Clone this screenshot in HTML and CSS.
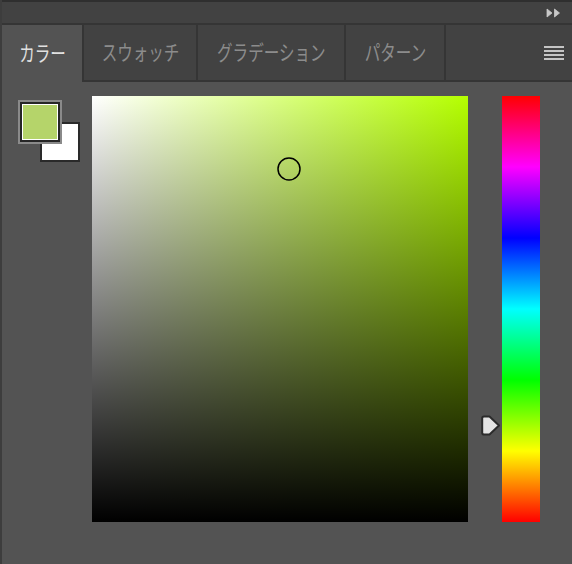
FILE: index.html
```html
<!DOCTYPE html>
<html lang="ja">
<head>
<meta charset="utf-8">
<title>カラー</title>
<link rel="stylesheet" href="styles.css">
</head>
<body>
<div class="panel">
  <div class="topbar">
    <svg class="collapse" width="15" height="10" viewBox="0 0 15 10">
      <path d="M1 1 L6 5 L1 9 Z M8.5 1 L13.5 5 L8.5 9 Z" fill="#c8c8c8" stroke="#c8c8c8" stroke-width="0.8" stroke-linejoin="round"/>
    </svg>
  </div>
  <div class="tabs">
    <div class="tab active w1"><span class="label">カラー</span></div>
    <div class="tab w2"><span class="label">スウォッチ</span></div>
    <div class="tab w3"><span class="label">グラデーション</span></div>
    <div class="tab w4"><span class="label">パターン</span></div>
    <div class="tab filler">
      <div class="menu"><i></i><i></i><i></i><i></i></div>
    </div>
  </div>
  <div class="content">
    <div class="swatches">
      <div class="bg-swatch"></div>
      <div class="fg-swatch"></div>
    </div>
    <div class="field">
      <svg class="picker" width="26" height="26" viewBox="0 0 26 26">
        <circle cx="13" cy="13" r="11" fill="none" stroke="#000" stroke-width="1.5"/>
      </svg>
    </div>
    <div class="hue-wrap">
      <div class="hue"></div>
      <svg class="hue-marker" width="20" height="21" viewBox="0 0 20 21">
        <path d="M3 1.5 L8.5 1.5 L18 10.5 L8.5 19.5 L3 19.5 Q1.2 19.5 1.2 17.7 L1.2 3.3 Q1.2 1.5 3 1.5 Z" fill="#e4e4e4" stroke="#2b2b2b" stroke-width="2" stroke-linejoin="round"/>
      </svg>
    </div>
  </div>
</div>
</body>
</html>
```

FILE: styles.css
```css
* { box-sizing: border-box; }
html, body {
  margin: 0;
  padding: 0;
  background: #535353;
  width: 572px;
  height: 564px;
  overflow: hidden;
  font-family: "Noto Sans CJK JP", "Noto Sans", sans-serif;
}
.panel {
  height: 564px;
  border-left: 2px solid #3d3d3d;
}
.topbar {
  height: 25px;
  background: #424242;
  border-top: 2px solid #2f2f2f;
  border-bottom: 2px solid #353535;
  display: flex;
  justify-content: flex-end;
  align-items: center;
  padding-right: 11px;
}
.collapse { display: block; margin-top: 1px; }
.tabs {
  display: flex;
  height: 57px;
}
.tab {
  background: #424242;
  border-left: 2px solid #353535;
  border-bottom: 2px solid #353535;
  display: flex;
  align-items: center;
  justify-content: center;
  color: #8c8c8c;
  font-size: 21px;
  line-height: 1;
}
.tab.active {
  background: #535353;
  border: none;
  color: #e0e0e0;
}
.w1 { width: 80px; }
.w2 { width: 114px; }
.w3 { width: 148px; }
.w4 { width: 100px; }
.filler {
  flex: 1;
  justify-content: flex-end;
  padding-right: 8px;
}
.label {
  display: inline-block;
  white-space: nowrap;
  transform: scaleX(0.74);
  transform-origin: center;
  padding-bottom: 2px;
}
.menu {
  display: flex;
  flex-direction: column;
  gap: 2px;
  width: 20px;
  margin-top: 1px;
}
.menu i {
  display: block;
  height: 2px;
  background: #c4c4c4;
}
.content {
  display: flex;
  align-items: flex-start;
  padding: 14px 0 0 16px;
}
.swatches {
  display: grid;
  width: 74px;
}
.fg-swatch, .bg-swatch { grid-area: 1 / 1; }
.fg-swatch {
  width: 44px;
  height: 44px;
  margin-top: 4px;
  border: 2px solid #8a8a8a;
  background: #b5d46a;
  box-shadow: inset 0 0 0 2px #262626, inset 0 0 0 3px #ffffff;
  z-index: 1;
}
.bg-swatch {
  width: 40px;
  height: 40px;
  margin: 26px 0 0 22px;
  border: 2px solid #2a2a2a;
  background: #ffffff;
}
.field {
  position: relative;
  width: 376px;
  height: 426px;
  background:
    linear-gradient(to top, #000 0%, rgba(0,0,0,0) 100%),
    linear-gradient(to right, #ffffff 0%, #b5ff00 100%);
}
.picker {
  position: absolute;
  left: 183.5px;
  top: 60px;
}
.hue-wrap {
  position: relative;
  margin-left: 34px;
}
.hue {
  width: 38px;
  height: 426px;
  background: linear-gradient(to bottom,
    #ff0000 0%, #ff00ff 16.667%, #0000ff 33.333%, #00ffff 50%,
    #00ff00 66.667%, #ffff00 83.333%, #ff0000 100%);
}
.hue-marker {
  position: absolute;
  left: -21px;
  top: 319px;
}
```
